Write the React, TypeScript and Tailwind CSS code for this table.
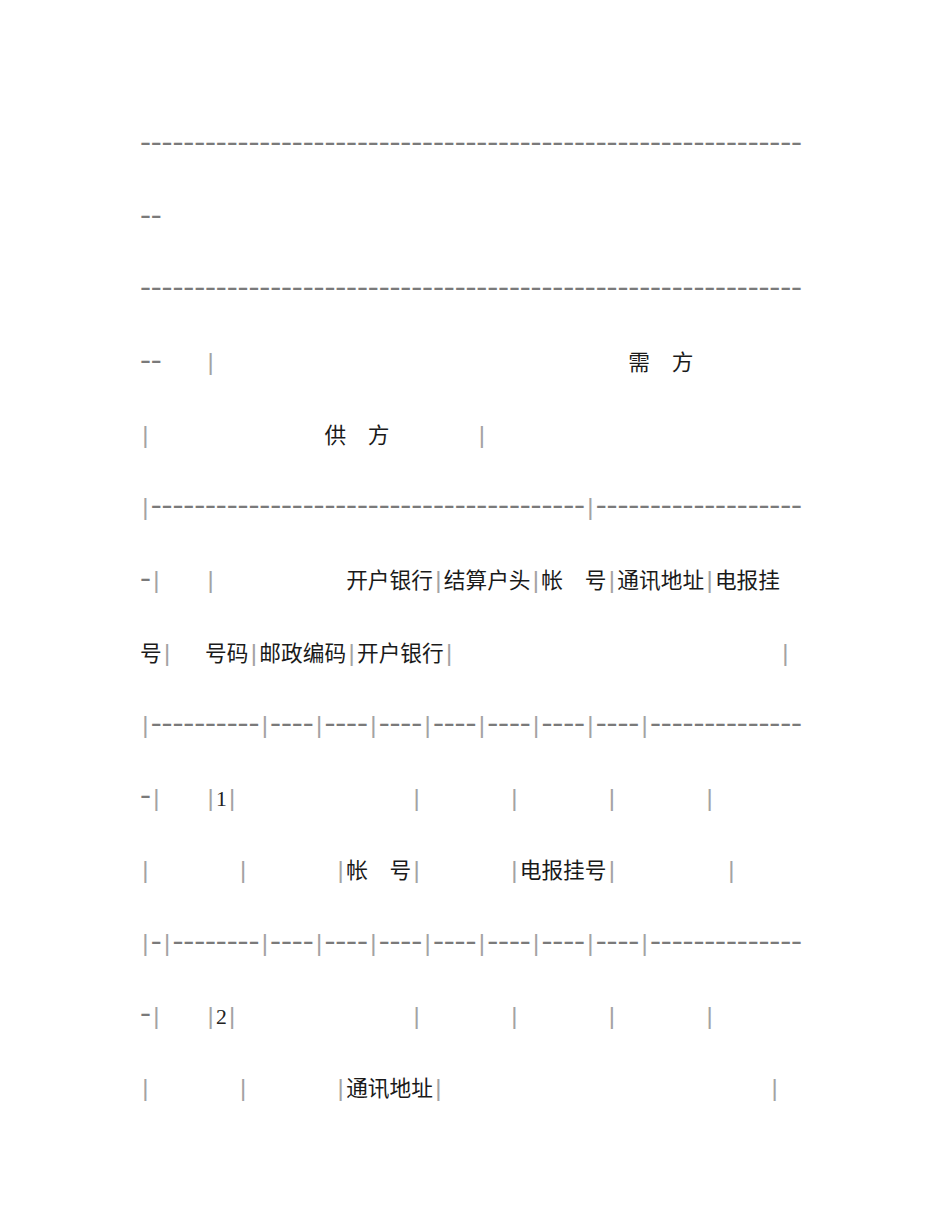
const CJK = /[\u2e80-\u9fff\uff00-\uffef]/;

// width in half-width columns
const cols = (s: string) => [...s].reduce((n, c) => n + (CJK.test(c) ? 2 : 1), 0);

function row(parts: [number, string][]) {
  let out = "";
  let col = 0;
  for (const [at, s] of parts) {
    out += " ".repeat(Math.max(0, at - col)) + s;
    col = Math.max(col, at) + cols(s);
  }
  return out;
}

const dash = (n: number) => "-".repeat(n);
const rule = (first: string) =>
  first + "|----|----|----|----|----|----|----|" + dash(14);

const lines: string[] = [
  dash(61),
  "--",
  dash(61),
  row([[0, "--"], [6, "|"], [45, "需"], [49, "方"]]),
  row([[0, "|"], [17, "供"], [21, "方"], [31, "|"]]),
  row([[0, "|" + dash(40) + "|" + dash(19)]]),
  row([[0, "-|"], [6, "|"], [19, "开户银行|结算户头|帐  号|通讯地址|电报挂"]]),
  row([[0, "号|"], [6, "号码|邮政编码|开户银行|"], [59, "|"]]),
  rule("|" + dash(10)),
  row([[0, "-|"], [6, "|1|"], [25, "|"], [34, "|"], [43, "|"], [52, "|"]]),
  row([[0, "|"], [9, "|"], [18, "|帐  号|"], [34, "|电报挂号|"], [54, "|"]]),
  rule("|-|" + dash(8)),
  row([[0, "-|"], [6, "|2|"], [25, "|"], [34, "|"], [43, "|"], [52, "|"]]),
  row([[0, "|"], [9, "|"], [18, "|通讯地址|"], [58, "|"]]),
];

function Line({ text }: { text: string }) {
  const tokens =
    text.match(/[\u2e80-\u9fff\uff00-\uffef]+|\||-+|[0-9]+|[^|\-0-9\u2e80-\u9fff\uff00-\uffef]+/g) ?? [];
  return (
    <div className="h-[72.6px] leading-[72.6px] whitespace-pre">
      {tokens.map((t, i) => {
        if (t === "|")
          return (
            <span
              key={i}
              className="inline-flex w-[10.85px] justify-center leading-none text-[24px] text-[#a3a3a3] [font-family:'Liberation_Sans',sans-serif]"
            >
              |
            </span>
          );
        if (CJK.test(t))
          return (
            <span
              key={i}
              className="leading-none text-[21.7px] text-[#1a1a1a] [font-family:'Noto_Sans_CJK_SC','Noto_Sans_CJK_JP',sans-serif]"
            >
              {t}
            </span>
          );
        if (t[0] === "-")
          return (
            <span
              key={i}
              className="inline-block -translate-x-[3.6px] leading-none align-[0.5px] text-[30px] tracking-[-7.15px] text-[#7a7a7a]"
            >
              {t}
            </span>
          );
        if (/[0-9]/.test(t))
          return (
            <span
              key={i}
              className="leading-none text-[21.7px] text-[#222] [font-family:'Liberation_Serif',serif]"
            >
              {t}
            </span>
          );
        return (
          <span key={i} className="leading-none">
            {t}
          </span>
        );
      })}
    </div>
  );
}

export default function App() {
  return (
    <div className="min-h-[1230px] w-[950px] bg-white pl-[140px] pt-[111.5px] text-[18.08px] [font-family:'Liberation_Mono',monospace]">
      {lines.map((l, i) => (
        <Line key={i} text={l} />
      ))}
    </div>
  );
}
